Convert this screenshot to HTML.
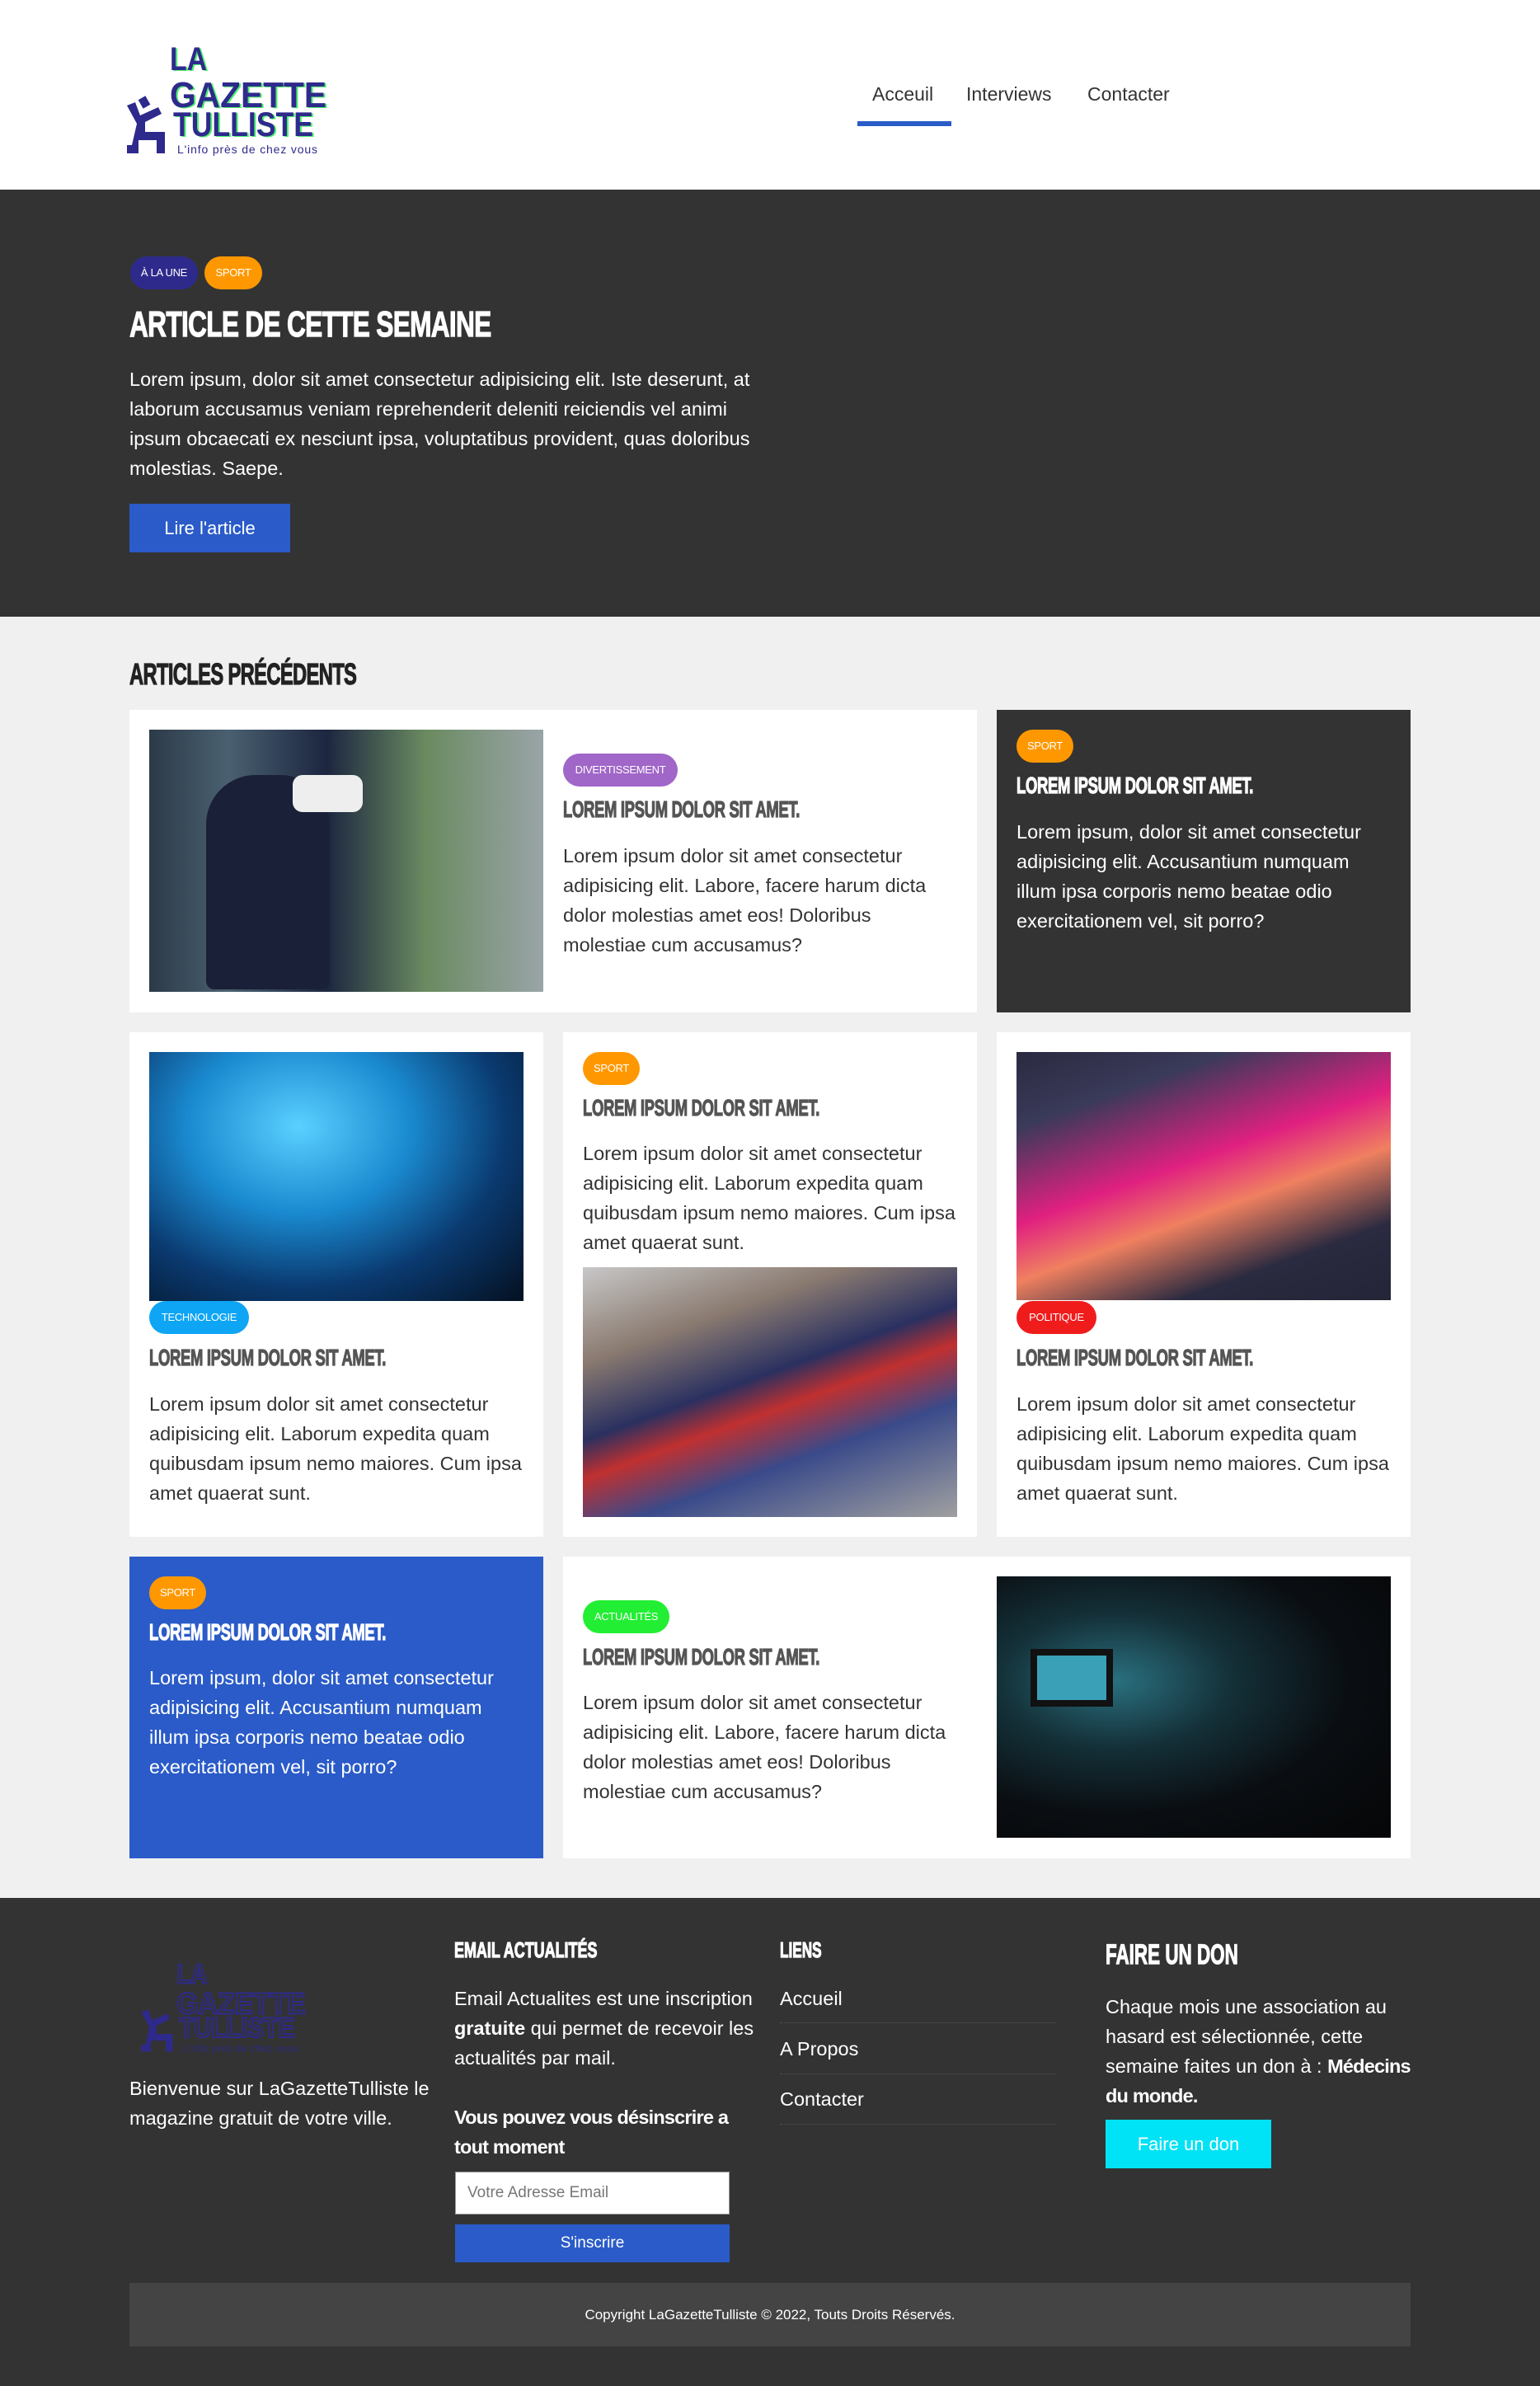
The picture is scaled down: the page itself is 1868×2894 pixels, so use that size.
<!DOCTYPE html>
<html><head><meta charset="utf-8"><style>
*{margin:0;padding:0;box-sizing:border-box}
body{width:1868px;height:2894px;position:relative;font-family:"Liberation Sans",sans-serif;background:#f0f0f0;overflow:hidden}
.a{position:absolute}
.cond{display:inline-block;white-space:nowrap;transform-origin:left top;font-weight:900;-webkit-text-stroke:1.2px currentColor}
.tag{position:absolute;height:40px;border-radius:20px;color:#fff;font-size:13px;line-height:40px;text-align:center;letter-spacing:-.3px}
.p{position:absolute;font-size:23.5px;line-height:36px;color:#333;white-space:nowrap;letter-spacing:0}
.ct{position:absolute;font-size:28px;line-height:32px}
.ct span{display:inline-block;white-space:nowrap;transform:scaleX(.66);transform-origin:left top;font-weight:900;letter-spacing:-.5px;-webkit-text-stroke:1.2px currentColor}
.card{position:absolute;background:#fff}
.lg text{font-family:"Liberation Sans",sans-serif;font-weight:900}
</style></head><body>
<!-- header -->
<div class="a" style="left:0;top:0;width:1868px;height:230px;background:#fff"></div>
<svg class="a lg" style="left:140px;top:30px" width="280" height="170" viewBox="0 0 280 170">
<g fill="#4cf06c" transform="translate(2,1)">
<text x="66" y="55" font-size="40" textLength="45" lengthAdjust="spacingAndGlyphs">LA</text>
<text x="66" y="100" font-size="44" textLength="190" lengthAdjust="spacingAndGlyphs">GAZETTE</text>
<text x="70" y="135" font-size="42" textLength="170" lengthAdjust="spacingAndGlyphs">TULLISTE</text></g>
<g fill="#2e2a8c">
<text x="66" y="55" font-size="40" textLength="45" lengthAdjust="spacingAndGlyphs">LA</text>
<text x="66" y="100" font-size="44" textLength="190" lengthAdjust="spacingAndGlyphs">GAZETTE</text>
<text x="70" y="135" font-size="42" textLength="170" lengthAdjust="spacingAndGlyphs">TULLISTE</text>
<text x="75" y="156" font-size="14" textLength="170" style="font-weight:400">L'info près de chez vous</text>
<rect x="30" y="88" width="10" height="12" transform="rotate(-30 35 94)"/>
<path d="M14 98 L24 94 L30 110 L52 100 L56 108 L36 118 L36 130 L60 130 L60 156 L50 156 L50 140 L28 140 L28 156 L14 156 L14 146 L20 146 L26 120 Z"/>
</g></svg>
<div class="a" style="left:1058px;top:101px;font-size:23px;color:#333">Acceuil</div>
<div class="a" style="left:1172px;top:101px;font-size:23px;color:#333">Interviews</div>
<div class="a" style="left:1319px;top:101px;font-size:23px;color:#333">Contacter</div>
<div class="a" style="left:1040px;top:147px;width:114px;height:6px;background:#2a5bc8"></div>
<!-- hero -->
<div class="a" style="left:0;top:230px;width:1868px;height:518px;background:#333"></div>
<div class="tag" style="left:158px;top:311px;width:82px;background:#2e2a8c">À LA UNE</div>
<div class="tag" style="left:248px;top:311px;width:70px;background:#ff9800">SPORT</div>
<div class="a" style="left:157px;top:370px;font-size:44px;line-height:48px;color:#fff"><span class="cond" style="transform:scaleX(.72);letter-spacing:-1px">ARTICLE DE CETTE SEMAINE</span></div>
<div class="p" style="left:157px;top:442px;color:#fff">Lorem ipsum, dolor sit amet consectetur adipisicing elit. Iste deserunt, at<br>laborum accusamus veniam reprehenderit deleniti reiciendis vel animi<br>ipsum obcaecati ex nesciunt ipsa, voluptatibus provident, quas doloribus<br>molestias. Saepe.</div>
<div class="a" style="left:157px;top:611px;width:195px;height:59px;background:#2a5bc8;color:#fff;font-size:22px;line-height:59px;text-align:center">Lire l'article</div>
<!-- articles -->
<div class="a" style="left:157px;top:798px;font-size:36px;line-height:40px;color:#222"><span class="cond" style="transform:scaleX(.66);letter-spacing:-1px">ARTICLES PRÉCÉDENTS</span></div>
<!-- row1 -->
<div class="card" style="left:157px;top:861px;width:1028px;height:367px"></div>
<div class="a" style="left:181px;top:885px;width:478px;height:318px;background:linear-gradient(90deg,#2c3a48 0%,#4a6070 20%,#1c2640 45%,#6a8a60 70%,#9aa4a8 100%)"></div>
<div class="a" style="left:250px;top:940px;width:150px;height:260px;background:#1a2038;border-radius:60px 60px 10px 10px"></div>
<div class="a" style="left:355px;top:940px;width:85px;height:45px;background:#eee;border-radius:12px"></div>
<div class="tag" style="left:683px;top:914px;width:139px;background:#a066c8">DIVERTISSEMENT</div>
<div class="ct" style="left:683px;top:966px;color:#555"><span>LOREM IPSUM DOLOR SIT AMET.</span></div>
<div class="p" style="left:683px;top:1020px">Lorem ipsum dolor sit amet consectetur<br>adipisicing elit. Labore, facere harum dicta<br>dolor molestias amet eos! Doloribus<br>molestiae cum accusamus?</div>
<div class="card" style="left:1209px;top:861px;width:502px;height:367px;background:#333"></div>
<div class="tag" style="left:1233px;top:885px;width:69px;background:#ff9800">SPORT</div>
<div class="ct" style="left:1233px;top:937px;color:#fff"><span>LOREM IPSUM DOLOR SIT AMET.</span></div>
<div class="p" style="left:1233px;top:991px;color:#fff">Lorem ipsum, dolor sit amet consectetur<br>adipisicing elit. Accusantium numquam<br>illum ipsa corporis nemo beatae odio<br>exercitationem vel, sit porro?</div>
<!-- row2 -->
<div class="card" style="left:157px;top:1252px;width:502px;height:612px"></div>
<div class="a" style="left:181px;top:1276px;width:454px;height:302px;background:radial-gradient(ellipse at 40% 30%,#5ad0ff 0%,#1a8ad0 35%,#0a3a70 65%,#041020 100%)"></div>
<div class="tag" style="left:181px;top:1578px;width:121px;background:#0ea5f5">TECHNOLOGIE</div>
<div class="ct" style="left:181px;top:1631px;color:#555"><span>LOREM IPSUM DOLOR SIT AMET.</span></div>
<div class="p" style="left:181px;top:1685px">Lorem ipsum dolor sit amet consectetur<br>adipisicing elit. Laborum expedita quam<br>quibusdam ipsum nemo maiores. Cum ipsa<br>amet quaerat sunt.</div>
<div class="card" style="left:683px;top:1252px;width:502px;height:612px"></div>
<div class="tag" style="left:707px;top:1276px;width:69px;background:#ff9800">SPORT</div>
<div class="ct" style="left:707px;top:1328px;color:#555"><span>LOREM IPSUM DOLOR SIT AMET.</span></div>
<div class="p" style="left:707px;top:1381px">Lorem ipsum dolor sit amet consectetur<br>adipisicing elit. Laborum expedita quam<br>quibusdam ipsum nemo maiores. Cum ipsa<br>amet quaerat sunt.</div>
<div class="a" style="left:707px;top:1537px;width:454px;height:303px;background:linear-gradient(160deg,#c8c8c8 0%,#8a7a70 25%,#2a3060 45%,#c03030 55%,#3a4a8a 70%,#a0a0a0 100%)"></div>
<div class="card" style="left:1209px;top:1252px;width:502px;height:612px"></div>
<div class="a" style="left:1233px;top:1276px;width:454px;height:301px;background:linear-gradient(160deg,#2a2a40 0%,#3a3a5a 20%,#e02080 45%,#f08060 60%,#2a2a40 80%,#252538 100%)"></div>
<div class="tag" style="left:1233px;top:1578px;width:97px;background:#f01c1c">POLITIQUE</div>
<div class="ct" style="left:1233px;top:1631px;color:#555"><span>LOREM IPSUM DOLOR SIT AMET.</span></div>
<div class="p" style="left:1233px;top:1685px">Lorem ipsum dolor sit amet consectetur<br>adipisicing elit. Laborum expedita quam<br>quibusdam ipsum nemo maiores. Cum ipsa<br>amet quaerat sunt.</div>
<!-- row3 -->
<div class="card" style="left:157px;top:1888px;width:502px;height:366px;background:#2a5bc8"></div>
<div class="tag" style="left:181px;top:1912px;width:69px;background:#ff9800">SPORT</div>
<div class="ct" style="left:181px;top:1964px;color:#fff"><span>LOREM IPSUM DOLOR SIT AMET.</span></div>
<div class="p" style="left:181px;top:2017px;color:#fff">Lorem ipsum, dolor sit amet consectetur<br>adipisicing elit. Accusantium numquam<br>illum ipsa corporis nemo beatae odio<br>exercitationem vel, sit porro?</div>
<div class="card" style="left:683px;top:1888px;width:1028px;height:366px"></div>
<div class="tag" style="left:707px;top:1941px;width:105px;background:#22ee33">ACTUALITÉS</div>
<div class="ct" style="left:707px;top:1994px;color:#555"><span>LOREM IPSUM DOLOR SIT AMET.</span></div>
<div class="p" style="left:707px;top:2047px">Lorem ipsum dolor sit amet consectetur<br>adipisicing elit. Labore, facere harum dicta<br>dolor molestias amet eos! Doloribus<br>molestiae cum accusamus?</div>
<div class="a" style="left:1209px;top:1912px;width:478px;height:317px;background:radial-gradient(ellipse at 30% 40%,#2a7080 0%,#143038 30%,#0a0e12 60%,#050607 100%)"></div>
<div class="a" style="left:1250px;top:2000px;width:100px;height:70px;background:#3aa0b8;border:8px solid #111"></div>
<!-- footer -->
<div class="a" style="left:0;top:2302px;width:1868px;height:592px;background:#333"></div>
<svg class="a lg" style="left:160px;top:2360px" width="230" height="140" viewBox="0 0 280 170">
<g fill="none" stroke="#2e2a8c" stroke-width="2.5">
<text x="66" y="55" font-size="40" textLength="45" lengthAdjust="spacingAndGlyphs">LA</text>
<text x="66" y="100" font-size="44" textLength="190" lengthAdjust="spacingAndGlyphs">GAZETTE</text>
<text x="70" y="135" font-size="42" textLength="170" lengthAdjust="spacingAndGlyphs">TULLISTE</text></g>
<g fill="#2e2a8c"><path d="M14 98 L24 94 L30 110 L52 100 L56 108 L36 118 L36 130 L60 130 L60 156 L50 156 L50 140 L28 140 L28 156 L14 156 L14 146 L20 146 L26 120 Z"/>
<text x="75" y="156" font-size="14" textLength="170" style="font-weight:400">L'info près de chez vous</text></g></svg>
<div class="p" style="left:157px;top:2515px;color:#fff">Bienvenue sur LaGazetteTulliste le<br>magazine gratuit de votre ville.</div>
<div class="a" style="left:551px;top:2350px;font-size:26px;color:#fff"><span class="cond" style="transform:scaleX(.69)">EMAIL ACTUALITÉS</span></div>
<div class="p" style="left:551px;top:2406px;color:#fff">Email Actualites est une inscription<br><b>gratuite</b> qui permet de recevoir les<br>actualités par mail.</div>
<div class="p" style="left:551px;top:2550px;color:#fff;font-weight:bold;letter-spacing:-.8px">Vous pouvez vous désinscrire a<br>tout moment</div>
<div class="a" style="left:552px;top:2634px;width:333px;height:52px;background:#fff;border:1px solid #999;font-size:19px;line-height:50px;padding-left:14px;color:#777">Votre Adresse Email</div>
<div class="a" style="left:552px;top:2698px;width:333px;height:46px;background:#2a5bc8;color:#fff;font-size:19px;line-height:46px;text-align:center">S'inscrire</div>
<div class="a" style="left:946px;top:2350px;font-size:26px;color:#fff"><span class="cond" style="transform:scaleX(.66)">LIENS</span></div>
<div class="p" style="left:946px;top:2406px;color:#fff">Accueil</div>
<div class="a" style="left:946px;top:2453px;width:334px;border-top:1px dotted #555"></div>
<div class="p" style="left:946px;top:2467px;color:#fff">A Propos</div>
<div class="a" style="left:946px;top:2515px;width:334px;border-top:1px dotted #555"></div>
<div class="p" style="left:946px;top:2528px;color:#fff">Contacter</div>
<div class="a" style="left:946px;top:2576px;width:334px;border-top:1px dotted #555"></div>
<div class="a" style="left:1341px;top:2352px;font-size:34px;color:#fff"><span class="cond" style="transform:scaleX(.66)">FAIRE UN DON</span></div>
<div class="p" style="left:1341px;top:2416px;color:#fff">Chaque mois une association au<br>hasard est sélectionnée, cette<br>semaine faites un don à : <b style="letter-spacing:-.8px">Médecins</b><br><b style="letter-spacing:-.8px">du monde.</b></div>
<div class="a" style="left:1341px;top:2571px;width:201px;height:59px;background:#00e2f5;color:#fff;font-size:22px;line-height:59px;text-align:center">Faire un don</div>
<div class="a" style="left:157px;top:2769px;width:1554px;height:77px;background:#444;color:#fff;font-size:17px;line-height:77px;text-align:center">Copyright LaGazetteTulliste © 2022, Touts Droits Réservés.</div>
</body></html>
